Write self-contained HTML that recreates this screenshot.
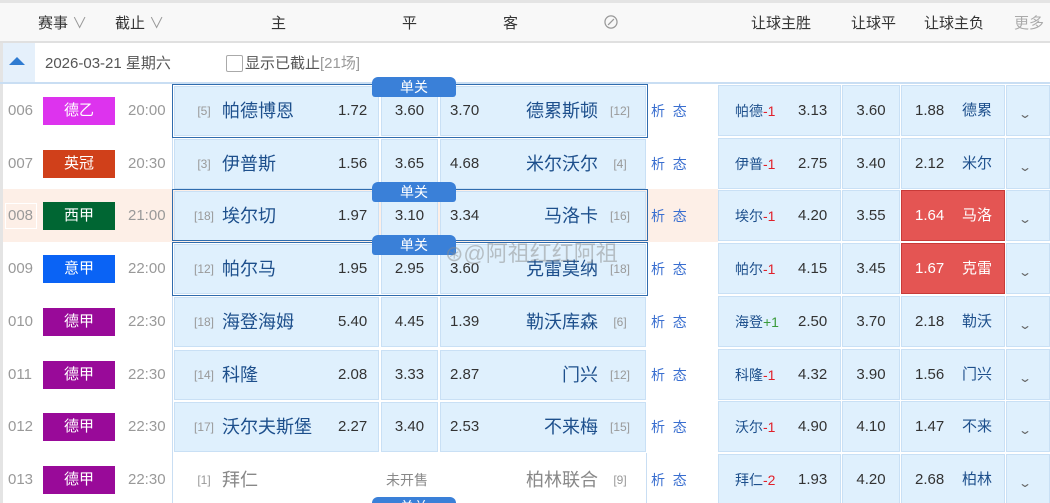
<!DOCTYPE html>
<html><head><meta charset="utf-8">
<style>
*{margin:0;padding:0;box-sizing:border-box}
html,body{width:1050px;height:503px;overflow:hidden}
body{background:#fff;font-family:"Liberation Sans","Noto Sans CJK SC",sans-serif;position:relative;color:#333}
.a{position:absolute;white-space:nowrap}
.t{position:absolute;white-space:nowrap;height:24px;line-height:24px}
.hdr{left:0;top:0;width:1050px;height:43px;background:#f8f8f8;border-top:3px solid #e4e4e4;border-bottom:2px solid #e0e0e0}
.h{top:12px;font-size:15px;color:#333}
.cell{position:absolute;background:#dff0fd;border:1px solid #c9e0f5}
.badge{position:absolute;width:72px;height:28px;color:#fff;font-size:15px;text-align:center;line-height:28px}
.sel{position:absolute;border:1px solid #2f6cae}
.tab{position:absolute;left:372px;width:84px;height:20px;background:#3a80d8;color:#fff;font-size:14px;text-align:center;line-height:20px;border-radius:6px 6px 3px 3px}
.red{background:#e45553!important;border:1px solid #c83a38!important;color:#fff}
</style></head><body>
<div class="a hdr"></div>
<div class="a h" style="left:38px">赛事<span style="color:#999"> ∨</span></div>
<div class="a h" style="left:115px">截止<span style="color:#999"> ∨</span></div>
<div class="a h" style="left:271px">主</div>
<div class="a h" style="left:402px">平</div>
<div class="a h" style="left:503px">客</div>
<div class="a h" style="left:602px;font-size:18px;top:9px;color:#999">⊘</div>
<div class="a h" style="left:751px">让球主胜</div>
<div class="a h" style="left:851px">让球平</div>
<div class="a h" style="left:924px">让球主负</div>
<div class="a h" style="left:1014px;color:#aaa">更多</div>
<div class="a" style="left:0;top:43px;width:3px;height:460px;background:#e4e4e4"></div>
<div class="a" style="left:3px;top:43px;width:32px;height:40px;background:#e5f0fb"></div>
<div class="a" style="left:9px;top:57px;width:0;height:0;border-left:8px solid transparent;border-right:8px solid transparent;border-bottom:8px solid #2f7bd1"></div>
<div class="t" style="left:45px;top:52px;font-size:15px;color:#555">2026-03-21 星期六</div>
<div class="a" style="left:226px;top:55px;width:17px;height:17px;border:1px solid #aaa;border-radius:2px;background:#fff"></div>
<div class="t" style="left:245px;top:52px;font-size:15px;color:#555">显示已截止<span style="color:#999">[21场]</span></div>
<div class="a" style="left:0;top:82px;width:1050px;height:2px;background:#c9def3"></div>
<div class="a" style="left:172px;top:84px;width:1px;height:419px;background:#c9def3"></div>
<div id="rows"></div>
<div class="a" style="left:445px;top:236px;font-size:22px;color:rgba(140,140,140,.5)">⊛@阿祖红红阿祖</div>
<script>
var R=[
["006","德乙","#dd33ee","20:00","[5]","帕德博恩","1.72","3.60","3.70","德累斯顿","[12]","帕德","-1","3.13","3.60","1.88","德累",1,0,0],
["007","英冠","#d0401a","20:30","[3]","伊普斯","1.56","3.65","4.68","米尔沃尔","[4]","伊普","-1","2.75","3.40","2.12","米尔",0,0,0],
["008","西甲","#006633","21:00","[18]","埃尔切","1.97","3.10","3.34","马洛卡","[16]","埃尔","-1","4.20","3.55","1.64","马洛",1,1,1],
["009","意甲","#0a63f5","22:00","[12]","帕尔马","1.95","2.95","3.60","克雷莫纳","[18]","帕尔","-1","4.15","3.45","1.67","克雷",1,0,1],
["010","德甲","#990a99","22:30","[18]","海登海姆","5.40","4.45","1.39","勒沃库森","[6]","海登","+1","2.50","3.70","2.18","勒沃",0,0,0],
["011","德甲","#990a99","22:30","[14]","科隆","2.08","3.33","2.87","门兴","[12]","科隆","-1","4.32","3.90","1.56","门兴",0,0,0],
["012","德甲","#990a99","22:30","[17]","沃尔夫斯堡","2.27","3.40","2.53","不来梅","[15]","沃尔","-1","4.90","4.10","1.47","不来",0,0,0],
["013","德甲","#990a99","22:30","[1]","拜仁","","","","柏林联合","[9]","拜仁","-2","1.93","4.20","2.68","柏林",0,0,0]];
var h="";
function T(l,c,s,col,txt,extra){return '<div class="t" style="left:'+l+'px;top:'+(c-12)+'px;font-size:'+s+'px;color:'+col+';'+(extra||'')+'">'+txt+'</div>';}
R.forEach(function(r,i){
 var t=Math.round(84+i*52.7),c=t+27;
 if(r[18])h+='<div class="a" style="left:3px;top:'+t+'px;width:715px;height:53px;background:#fdefe7"></div>';
 if(r[18])h+='<div class="a" style="left:5px;top:'+(c-13)+'px;width:32px;height:26px;border:1px solid #fff"></div>';
 h+=T(8,c,15,'#999',r[0]);
 h+='<div class="badge" style="left:43px;top:'+(c-14)+'px;background:'+r[2]+'">'+r[1]+'</div>';
 h+=T(128,c,15,'#999',r[3]);
 var g=r[6]==="";
 if(!g){
  h+='<div class="cell" style="left:174px;top:'+(t+2)+'px;width:205px;height:50px"></div>';
  h+='<div class="cell" style="left:381px;top:'+(t+2)+'px;width:57px;height:50px"></div>';
  h+='<div class="cell" style="left:440px;top:'+(t+2)+'px;width:206px;height:50px"></div>';
 }else{
  h+='<div class="a" style="left:646px;top:'+t+'px;width:1px;height:53px;background:#c9def3"></div>';
 }
 var nc=g?'#888':'#1d4f8c';
 h+=T(192,c,12,'#999',r[4],'width:24px;text-align:center');
 h+=T(222,c,18,nc,r[5]);
 if(!g){
  h+=T(338,c,15,'#333',r[6]);
  h+=T(381,c,15,'#333',r[7],'width:57px;text-align:center');
  h+=T(450,c,15,'#333',r[8]);
 }else{
  h+=T(386,c,14,'#888','未开售');
 }
 h+='<div class="t" style="right:452px;top:'+(c-12)+'px;font-size:18px;color:'+nc+'">'+r[9]+'</div>';
 h+=T(606,c,12,'#999',r[10],'width:28px;text-align:center');
 h+=T(651,c,14,'#3a6fd0','析&nbsp; 态');
 h+='<div class="cell" style="left:718px;top:'+(t+1)+'px;width:123px;height:51px"></div>';
 h+='<div class="cell" style="left:842px;top:'+(t+1)+'px;width:58px;height:51px"></div>';
 h+='<div class="cell'+(r[19]?' red':'')+'" style="left:901px;top:'+(t+1)+'px;width:104px;height:51px"></div>';
 h+='<div class="cell" style="left:1006px;top:'+(t+1)+'px;width:44px;height:51px"></div>';
 h+=T(735,c,14,'#1d4f8c',r[11]+'<span style="color:'+(r[12]=="+1"?'#3a9a3a':'#e0202a')+'">'+r[12]+'</span>');
 h+=T(798,c,15,'#333',r[13]);
 h+=T(842,c,15,'#333',r[14],'width:58px;text-align:center');
 h+=T(915,c,15,r[19]?'#fff':'#333',r[15]);
 h+=T(962,c,15,r[19]?'#fff':'#1d4f8c',r[16]);
 h+='<div class="a" style="left:1020px;top:'+(c-4)+'px;font-size:12px;color:#666;transform:scaleX(1.4)">⌄</div>';
 if(r[17]){
  h+='<div class="sel" style="left:172px;top:'+t+'px;width:476px;height:'+(i==2?52:54)+'px"></div>';
  h+='<div class="tab" style="top:'+(t-7)+'px">单关</div>';
 }
});
h+='<div class="tab" style="top:497px">单关</div>';
document.getElementById("rows").innerHTML=h;
</script>
</body></html>
